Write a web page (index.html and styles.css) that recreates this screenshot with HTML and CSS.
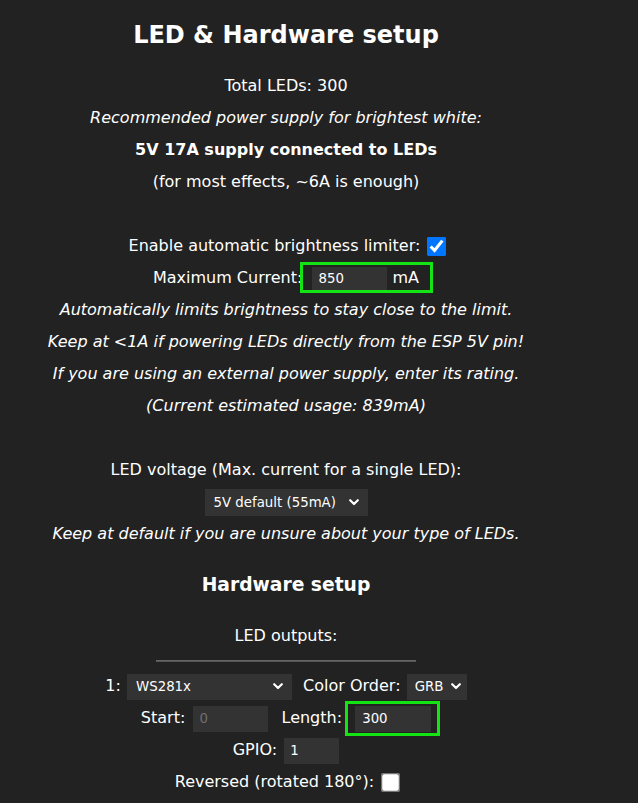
FILE: index.html
```html
<!DOCTYPE html>
<html>
<head>
<meta charset="utf-8">
<title>LED Settings</title>
<link rel="stylesheet" href="styles.css">
</head>
<body>
<div class="page">
  <h2 class="title">LED &amp; Hardware setup</h2>
  <div class="lines">
    Total LEDs: 300<br>
    <i>Recommended power supply for brightest white:</i><br>
    <b>5V 17A supply connected to LEDs</b><br>
    (for most effects, ~6A is enough)<br>
    <br>
    Enable automatic brightness limiter: <input type="checkbox" class="cb" checked><br>
    Maximum Current: <span class="mark mark-ma"><input class="field field-ma" type="text" value="850"> mA</span><br>
    <i>Automatically limits brightness to stay close to the limit.</i><br>
    <i>Keep at &lt;1A if powering LEDs directly from the ESP 5V pin!</i><br>
    <i>If you are using an external power supply, enter its rating.</i><br>
    <i>(Current estimated usage: 839mA)</i><br>
    <br>
    LED voltage (Max. current for a single LED):<br>
    <select class="sel sel-volt"><option>5V default (55mA)</option></select><br>
    <i>Keep at default if you are unsure about your type of LEDs.</i>
  </div>
  <h3 class="subtitle">Hardware setup</h3>
  <div class="lines">LED outputs:</div>
  <hr class="rule">
  <div class="lines">
    1: <select class="sel sel-type"><option>WS281x</option></select> Color Order: <select class="sel sel-order"><option>GRB</option></select><br>
    Start: <input class="field field-start" type="text" value="0" disabled> Length: <span class="mark mark-len"><input class="field field-len" type="text" value="300"></span><br>
    GPIO: <input class="field field-gpio" type="text" value="1"><br>
    Reversed (rotated 180°): <input type="checkbox" class="cb">
  </div>
</div>
</body>
</html>
```

FILE: styles.css
```css
html, body {
  margin: 0;
  padding: 0;
  background: #222;
}
body {
  color: #fff;
  font-family: "DejaVu Sans", Verdana, sans-serif;
  font-size: 16px;
}
.page {
  width: 572px;
  text-align: center;
  line-height: 32px;
}
.title {
  font-size: 24px;
  line-height: 48px;
  margin: 11px 0 11px;
}
.subtitle {
  font-size: 18.72px;
  line-height: 38px;
  margin: 16px 0 16px;
}
.lines {
  line-height: 32px;
}
.rule {
  width: 260px;
  height: 0;
  border: 0;
  border-top: 1px solid #666;
  border-bottom: 1px solid #555;
  margin: 8px auto 8px;
}
.field {
  box-sizing: border-box;
  background: #333;
  color: #fff;
  border: 0;
  font-family: "DejaVu Sans", Verdana, sans-serif;
  font-size: 13.33px;
  padding: 0 6px;
  margin: 0;
  vertical-align: middle;
  outline: none;
}
.field:disabled {
  color: #6f6f6f;
}
.field-ma { width: 75px; height: 24px; margin-left: 5px; }
.field-start { width: 75px; height: 26px; margin-left: 3px; margin-right: 8px; }
.field-len { width: 76px; height: 26px; padding-left: 7px; margin-left: 8px; }
.field-gpio { width: 55px; height: 26px; margin-left: 2px; }
.sel {
  box-sizing: border-box;
  -webkit-appearance: none;
  appearance: none;
  background-color: #333;
  color: #fff;
  border: 0;
  font-family: "DejaVu Sans", Verdana, sans-serif;
  font-size: 13.33px;
  padding: 0 8px;
  margin: 0;
  vertical-align: middle;
  background-image: url("data:image/svg+xml;utf8,<svg xmlns='http://www.w3.org/2000/svg' width='10' height='7' viewBox='0 0 10 7'><polyline points='1.2,1.2 5,5 8.8,1.2' fill='none' stroke='white' stroke-width='2.2' stroke-linecap='round' stroke-linejoin='round'/></svg>");
  background-repeat: no-repeat;
  outline: none;
}
.sel-volt { width: 163px; height: 27px; background-position: right 9px center; padding-left: 9px; }
.sel-type { width: 165px; height: 26px; background-position: right 9px center; padding-left: 9px; margin-left: 1px; margin-right: 6px; }
.sel-order { width: 60px; height: 26px; background-position: right 6px center; padding-left: 8px; margin-left: 1px; }
.cb {
  margin: 0 0 0 5px;
  width: 13px;
  height: 13px;
  vertical-align: middle;
  transform: scale(1.5);
}
.mark {
  position: relative;
  display: inline-block;
  line-height: 28px;
}
.mark::after {
  content: "";
  position: absolute;
  border: 3px solid #14e414;
  pointer-events: none;
}
.mark-ma::after {
  left: -7px;
  right: -14px;
  top: -2px;
  bottom: -1px;
}
.mark-len::after {
  left: -2px;
  right: -9px;
  top: -3px;
  bottom: -4px;
}
```
